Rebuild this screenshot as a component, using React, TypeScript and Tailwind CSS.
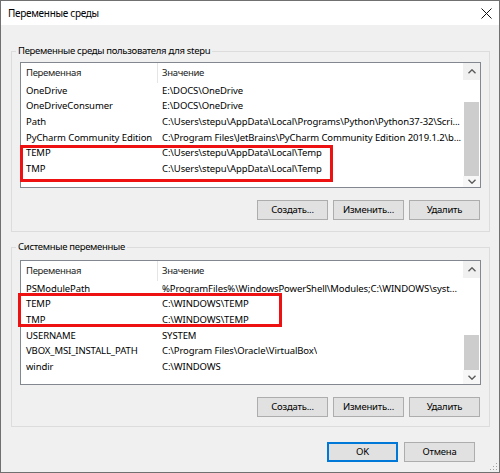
import React from "react";

type Row = [string, string];

function Chevron({ down }: { down?: boolean }) {
  return (
    <svg width="8" height="5" viewBox="0 0 8 5">
      <path
        d={down ? "M0.5 0.8 L4 4.2 L7.5 0.8" : "M0.5 4.2 L4 0.8 L7.5 4.2"}
        fill="none"
        stroke="#5a5a5a"
        strokeWidth="1.4"
      />
    </svg>
  );
}

function Scrollbar({ track, thumb, down }: { track: string; thumb: string; down: string }) {
  return (
    <div className="w-[17px] flex flex-col shrink-0">
      <div className="h-[17px] bg-[#f0f0f0] flex items-center justify-center shrink-0">
        <Chevron />
      </div>
      <div className={`${track} bg-white shrink-0`} />
      <div className={`${thumb} bg-[#cdcdcd] mx-[1px] shrink-0`} />
      <div className={`${down} bg-[#f7f7f7] flex items-center justify-center`}>
        <Chevron down />
      </div>
    </div>
  );
}

function VarList({
  rows,
  heightClass,
  scroll,
  highlight,
}: {
  rows: Row[];
  heightClass: string;
  scroll: React.ReactNode;
  highlight: React.ReactNode;
}) {
  return (
    <div className={`relative border border-[#828790] bg-white ${heightClass} flex min-w-0`}>
      <div className="flex-1 min-w-0 flex flex-col overflow-hidden">
        <div className="h-[20px] flex items-center shrink-0 text-[#1a1a1a] tracking-[-0.3px]">
          <div className="w-[137px] h-full flex items-center pl-[5px] border-r border-[#e5e5e5] shrink-0">Переменная</div>
          <div className="pl-[4px]">Значение</div>
        </div>
        {rows.map(([k, v], i) => (
          <div key={i} className="h-[15.6px] flex items-center shrink-0 whitespace-nowrap">
            <div className="w-[137px] pl-[5px] shrink-0 overflow-hidden">{k}</div>
            <div className="pl-[4px] min-w-0 overflow-hidden">{v}</div>
          </div>
        ))}
      </div>
      {scroll}
      {highlight}
    </div>
  );
}

function Btn({ children, def }: { children: React.ReactNode; def?: boolean }) {
  return (
    <div
      className={`w-[71px] h-[20px] flex items-center justify-center bg-[#e1e1e1] border shrink-0 tracking-[-0.2px] ${
        def ? "border-[#0078d7] shadow-[inset_0_0_0_1px_#0078d7]" : "border-[#adadad]"
      }`}
    >
      {children}
    </div>
  );
}

export default function App() {
  const userRows: Row[] = [
    ["OneDrive", "E:\\DOCS\\OneDrive"],
    ["OneDriveConsumer", "E:\\DOCS\\OneDrive"],
    ["Path", "C:\\Users\\stepu\\AppData\\Local\\Programs\\Python\\Python37-32\\Scri..."],
    ["PyCharm Community Edition", "C:\\Program Files\\JetBrains\\PyCharm Community Edition 2019.1.2\\b..."],
    ["TEMP", "C:\\Users\\stepu\\AppData\\Local\\Temp"],
    ["TMP", "C:\\Users\\stepu\\AppData\\Local\\Temp"],
  ];
  const sysRows: Row[] = [
    ["PSModulePath", "%ProgramFiles%\\WindowsPowerShell\\Modules;C:\\WINDOWS\\syst..."],
    ["TEMP", "C:\\WINDOWS\\TEMP"],
    ["TMP", "C:\\WINDOWS\\TEMP"],
    ["USERNAME", "SYSTEM"],
    ["VBOX_MSI_INSTALL_PATH", "C:\\Program Files\\Oracle\\VirtualBox\\"],
    ["windir", "C:\\WINDOWS"],
  ];

  return (
    <div className="w-[500px] h-[473px] relative border border-[#707070] bg-[#f0f0f0] flex flex-col font-['Noto_Sans',sans-serif] text-[9.5px] tracking-[-0.1px] text-black leading-[14px] overflow-hidden">
      {/* Title bar */}
      <div className="h-[24px] bg-white flex items-center justify-between pl-[7px] pr-[6px] shrink-0">
        <span className="text-[10px] tracking-[-0.3px]">Переменные среды</span>
        <svg width="11" height="11" viewBox="0 0 11 11" className="mr-[1px]">
          <path d="M0.5 0.5 L10.5 10.5 M10.5 0.5 L0.5 10.5" stroke="#111" strokeWidth="1" />
        </svg>
      </div>

      {/* Body */}
      <div className="flex-1 min-w-0 flex flex-col pt-[19px] pl-[10px] pr-[9px]">
        <fieldset className="border border-[#dcdcdc] min-w-0">
          <legend className="ml-[4px] px-[2px] leading-[14px] tracking-[-0.3px]">Переменные среды пользователя для stepu</legend>
          <div className="px-[8px] pt-[4px] pb-[11px] flex flex-col min-w-0">
            <VarList
              rows={userRows}
              heightClass="h-[126px]"
              scroll={<Scrollbar track="h-[22px]" thumb="h-[74px]" down="flex-1" />}
              highlight={
                <div className="absolute left-[-1px] top-[82px] w-[313px] h-[37px] border-[3px] border-[#ee1111]" />
              }
            />
            <div className="flex justify-end gap-[5px] mt-[12px] pr-[1px]">
              <Btn>Создать...</Btn>
              <Btn>Изменить...</Btn>
              <Btn>Удалить</Btn>
            </div>
          </div>
        </fieldset>

        <fieldset className="border border-[#dcdcdc] mt-[8px] min-w-0">
          <legend className="ml-[4px] px-[2px] leading-[14px] tracking-[-0.3px]">Системные переменные</legend>
          <div className="px-[8px] pt-[6px] pb-[9px] flex flex-col min-w-0">
            <VarList
              rows={sysRows}
              heightClass="h-[125px]"
              scroll={<Scrollbar track="h-[57px]" thumb="h-[35px]" down="flex-1" />}
              highlight={
                <div className="absolute left-[-3px] top-[32px] w-[264px] h-[34px] border-[3px] border-[#ee1111]" />
              }
            />
            <div className="flex justify-end gap-[5px] mt-[12px] pr-[1px]">
              <Btn>Создать...</Btn>
              <Btn>Изменить...</Btn>
              <Btn>Удалить</Btn>
            </div>
          </div>
        </fieldset>

        <div className="flex justify-end gap-[6px] mt-[15px] pr-[15px]">
          <Btn def>OK</Btn>
          <Btn>Отмена</Btn>
        </div>
      </div>

      {/* Resize grip */}
      <svg width="8" height="8" viewBox="0 0 8 8" className="absolute right-[1px] bottom-[1px]">
        <g fill="#a0a0a0">
          <rect x="6" y="0" width="1" height="1" />
          <rect x="3" y="3" width="1" height="1" />
          <rect x="6" y="3" width="1" height="1" />
          <rect x="0" y="6" width="1" height="1" />
          <rect x="3" y="6" width="1" height="1" />
          <rect x="6" y="6" width="1" height="1" />
        </g>
      </svg>
    </div>
  );
}
